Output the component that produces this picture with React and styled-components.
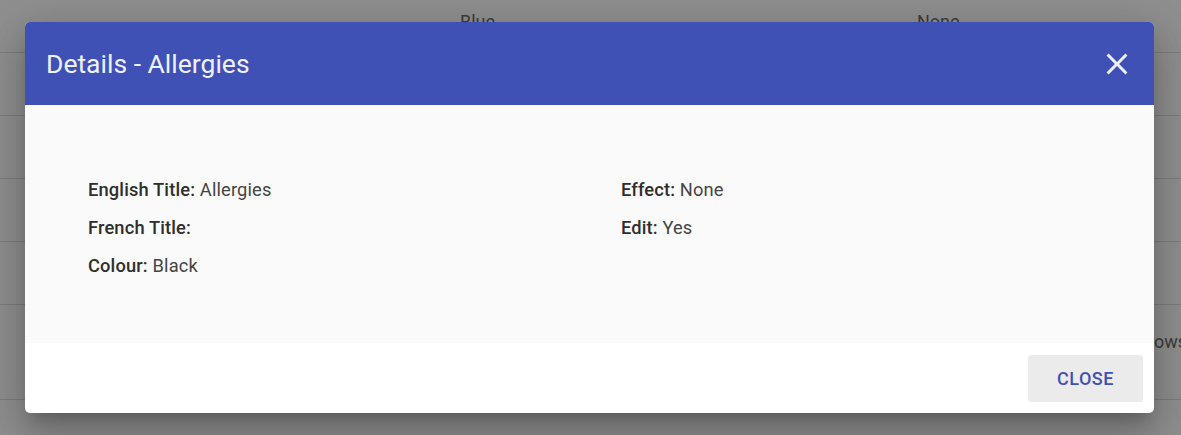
import React from "react";
import styled, { createGlobalStyle } from "styled-components";

const Global = createGlobalStyle`
  html, body { margin: 0; padding: 0; }
  body { font-family: Roboto, "Noto Sans", Arial, sans-serif; background: #8e8e8e; }
`;

const Page = styled.div`
  position: relative;
  width: 1181px;
  height: 435px;
  overflow: hidden;
  background: #8f8f8f;
`;

const Table = styled.div`
  display: flex;
  flex-direction: column;
`;

const Row = styled.div`
  position: relative;
  height: ${(p) => p.$h}px;
  border-bottom: 1px solid #7c7c7c;
  box-sizing: border-box;
  color: #3c3c3c;
  font-size: 18px;
`;

const Cell = styled.span`
  position: absolute;
  left: ${(p) => p.$x}px;
  top: ${(p) => p.$y}px;
`;

const Overlay = styled.div`
  position: absolute;
  inset: 0;
  display: flex;
  justify-content: flex-start;
  align-items: flex-start;
  padding: 22px 0 0 25px;
`;

const Dialog = styled.div`
  width: 1129px;
  height: 391px;
  border-radius: 5px;
  overflow: hidden;
  background: #fff;
  display: flex;
  flex-direction: column;
  box-shadow: 0 11px 15px -7px rgba(0,0,0,0.2), 0 24px 38px 3px rgba(0,0,0,0.14), 0 9px 46px 8px rgba(0,0,0,0.12);
`;

const Header = styled.div`
  height: 83px;
  background: #3f51b5;
  display: flex;
  align-items: center;
  justify-content: space-between;
  padding: 0 19px 0 21px;
  flex-shrink: 0;
`;

const Title = styled.h2`
  margin: 0;
  font-size: 26.5px;
  font-weight: 400;
  color: #eef0fb;
  letter-spacing: 0;
`;

const CloseIcon = styled.button`
  border: none;
  background: transparent;
  padding: 0;
  width: 36px;
  height: 36px;
  display: flex;
  align-items: center;
  justify-content: center;
  cursor: pointer;
`;

const Body = styled.div`
  height: 238px;
  background: #fafafa;
  padding: 74px 0 0 63px;
  box-sizing: border-box;
  display: grid;
  grid-template-columns: 533px 1fr;
  align-content: start;
`;

const Column = styled.div`
  display: flex;
  flex-direction: column;
  gap: 16px;
`;

const Item = styled.div`
  font-size: 18.3px;
  line-height: 22px;
  letter-spacing: 0.15px;
  color: #444;
`;

const Label = styled.span`
  font-weight: 500;
  color: #2e2e2e;
`;

const Footer = styled.div`
  flex: 1;
  display: flex;
  justify-content: flex-end;
  align-items: flex-start;
  padding: 12px 11px 0 0;
`;

const Button = styled.button`
  width: 115px;
  height: 47px;
  border: none;
  border-radius: 3px;
  background: #ebebeb;
  color: #3f51b5;
  font-family: Roboto, Arial, sans-serif;
  font-size: 18px;
  font-weight: 500;
  letter-spacing: 0.5px;
  text-transform: uppercase;
  cursor: pointer;
`;

const left = [
  ["English Title:", "Allergies"],
  ["French Title:", ""],
  ["Colour:", "Black"],
];
const right = [
  ["Effect:", "None"],
  ["Edit:", "Yes"],
];

export default function App() {
  return (
    <Page>
      <Global />
      <Table>
        <Row $h={53}>
          <Cell $x={460} $y={11}>Blue</Cell>
          <Cell $x={917} $y={11}>None</Cell>
        </Row>
        <Row $h={63} />
        <Row $h={63} />
        <Row $h={63} />
        <Row $h={63} />
        <Row $h={95}>
          <Cell $x={1148} $y={26}>rows</Cell>
        </Row>
      </Table>
      <Overlay>
        <Dialog>
          <Header>
            <Title>Details - Allergies</Title>
            <CloseIcon aria-label="close">
              <svg width="36" height="36" viewBox="0 0 24 24">
                <path d="M19 6.41 17.59 5 12 10.59 6.41 5 5 6.41 10.59 12 5 17.59 6.41 19 12 13.41 17.59 19 19 17.59 13.41 12z" fill="#eef0fb" />
              </svg>
            </CloseIcon>
          </Header>
          <Body>
            <Column>
              {left.map(([l, v]) => (
                <Item key={l}>
                  <Label>{l}</Label> {v}
                </Item>
              ))}
            </Column>
            <Column>
              {right.map(([l, v]) => (
                <Item key={l}>
                  <Label>{l}</Label> {v}
                </Item>
              ))}
            </Column>
          </Body>
          <Footer>
            <Button>Close</Button>
          </Footer>
        </Dialog>
      </Overlay>
    </Page>
  );
}
